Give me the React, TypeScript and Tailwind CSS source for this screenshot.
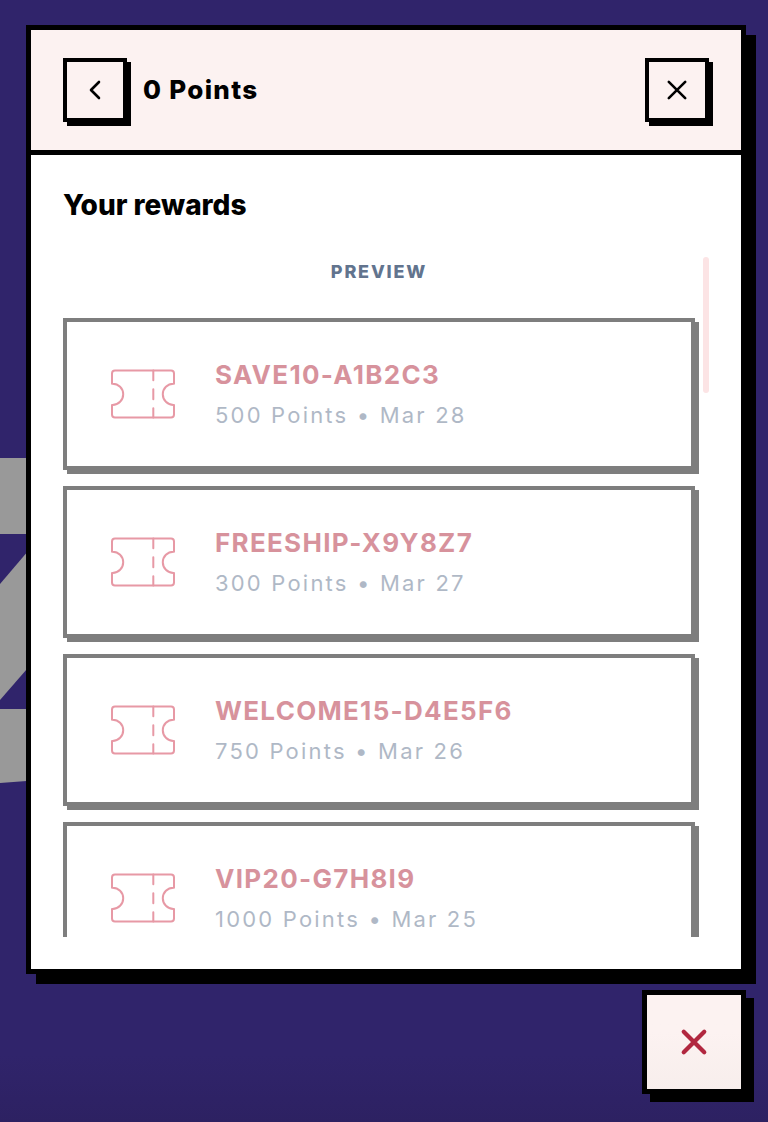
import React from "react";

interface Reward {
  code: string;
  points: number;
  date: string;
}

const rewards: Reward[] = [
  { code: "SAVE10-A1B2C3", points: 500, date: "Mar 28" },
  { code: "FREESHIP-X9Y8Z7", points: 300, date: "Mar 27" },
  { code: "WELCOME15-D4E5F6", points: 750, date: "Mar 26" },
  { code: "VIP20-G7H8I9", points: 1000, date: "Mar 25" },
];

const TicketIcon: React.FC = () => (
  <svg
    className="h-16 w-16 shrink-0 overflow-visible"
    viewBox="0 1 64 64"
    fill="none"
    stroke="#d1354e"
    strokeWidth="2"
    strokeLinecap="round"
    strokeLinejoin="round"
    aria-hidden="true">
    <path d="M4 8.4H60Q63 8.4 63 11.5V21.7H62.4A10.6 10.6 0 0 0 62.4 42.9H63V52.5Q63 55.6 60 55.6H4Q1 55.6 1 52.5V42.9H1.6A10.6 10.6 0 0 0 1.6 21.7H1V11.5Q1 8.4 4 8.4Z" />
    <path d="M42.3 8.4V18.2M42.3 27.2V37.2M42.3 46.2V55.6" />
  </svg>
);

const CloseIcon: React.FC<{ className: string; strokeWidth: number }> = ({
  className,
  strokeWidth,
}) => (
  <svg
    className={className}
    viewBox="0 0 24 24"
    fill="none"
    stroke="currentColor"
    strokeWidth={strokeWidth}
    strokeLinecap="round"
    aria-hidden="true">
    <path d="M3.8 3.8L20.2 20.2M20.2 3.8L3.8 20.2" />
  </svg>
);

const RewardCard: React.FC<{ reward: Reward }> = ({ reward }) => (
  <li className="flex items-center gap-10 border-4 border-black bg-white px-11 pt-[33px] pb-[31px] opacity-50 shadow-[4px_4px_0_#000]">
    <TicketIcon />
    <div className="min-w-0">
      <p className="text-[26px] leading-10 font-bold tracking-wider text-[#b1273c]">
        {reward.code}
      </p>
      <p className="text-[22px] leading-10 tracking-widest text-slate-500">
        {reward.points} Points • {reward.date}
      </p>
    </div>
  </li>
);

// Oversized "Z" of the storefront banner, mostly hidden by the panel
const BackdropLetter: React.FC = () => (
  <svg
    className="absolute top-[458px] left-0 h-[326px] w-10"
    viewBox="0 0 40 326"
    fill="#999999"
    aria-hidden="true">
    <path d="M0 0H40V76H0Z" />
    <path d="M0 126L40 79V196L0 242Z" />
    <path d="M0 251H40V322L0 325Z" />
  </svg>
);

const App: React.FC = () => {
  return (
    <div className="relative flex h-screen flex-col gap-4 overflow-hidden bg-[#30246b] bg-linear-to-b from-[#30246b] from-94% to-[#2d2162] pt-[25px] pr-[22px] pb-7 pl-[26px] font-['Inter',sans-serif]">
      <BackdropLetter />

      <section className="relative flex min-h-0 flex-1 flex-col border-[5px] border-black bg-white shadow-[10px_10px_0_#000]">
        <header className="flex items-center gap-4 border-b-[5px] border-black bg-[#fcf2f1] px-8 py-7">
          <button
            type="button"
            aria-label="Back"
            className="flex h-16 w-16 items-center justify-center border-4 border-black bg-[#fcf2f1] shadow-[4px_4px_0_#000]">
            <svg
              className="h-6 w-6"
              viewBox="0 0 24 24"
              fill="none"
              stroke="currentColor"
              strokeWidth="2.6"
              strokeLinecap="round"
              strokeLinejoin="round"
              aria-hidden="true">
              <path d="M16 4L8 12L16 20" />
            </svg>
          </button>
          <p className="flex-1 text-[26px] leading-10 font-extrabold tracking-wider">
            0 Points
          </p>
          <button
            type="button"
            aria-label="Close"
            className="flex h-16 w-16 items-center justify-center border-4 border-black bg-[#fcf2f1] shadow-[4px_4px_0_#000]">
            <CloseIcon className="h-6 w-6" strokeWidth={2.6} />
          </button>
        </header>

        <div className="flex min-h-0 flex-1 flex-col px-8 pt-[30px] pb-8">
          <h1 className="mb-8 text-[28px] leading-10 font-extrabold">
            Your rewards
          </h1>
          <div className="flex min-h-0 flex-1">
            <div className="min-w-0 flex-1 overflow-y-auto pr-2 [scrollbar-width:none]">
              <h2 className="mb-8 text-center text-lg leading-[29px] font-extrabold tracking-widest text-slate-500">
                PREVIEW
              </h2>
              <ul className="flex flex-col gap-4 pb-2">
                {rewards.map((reward) => (
                  <RewardCard key={reward.code} reward={reward} />
                ))}
              </ul>
            </div>
            <div className="h-1/5 w-1.5 rounded-full bg-[#fce4e5]" />
          </div>
        </div>
      </section>

      <button
        type="button"
        aria-label="Close rewards"
        className="relative flex h-[104px] w-[104px] items-center justify-center self-end border-[5px] border-black bg-linear-to-b from-[#fcf2f1] from-40% to-[#f7eeec] text-[#b1273f] shadow-[8px_8px_0_#000]">
        <CloseIcon className="h-[30px] w-[30px]" strokeWidth={3.4} />
      </button>
    </div>
  );
};

export default App;
